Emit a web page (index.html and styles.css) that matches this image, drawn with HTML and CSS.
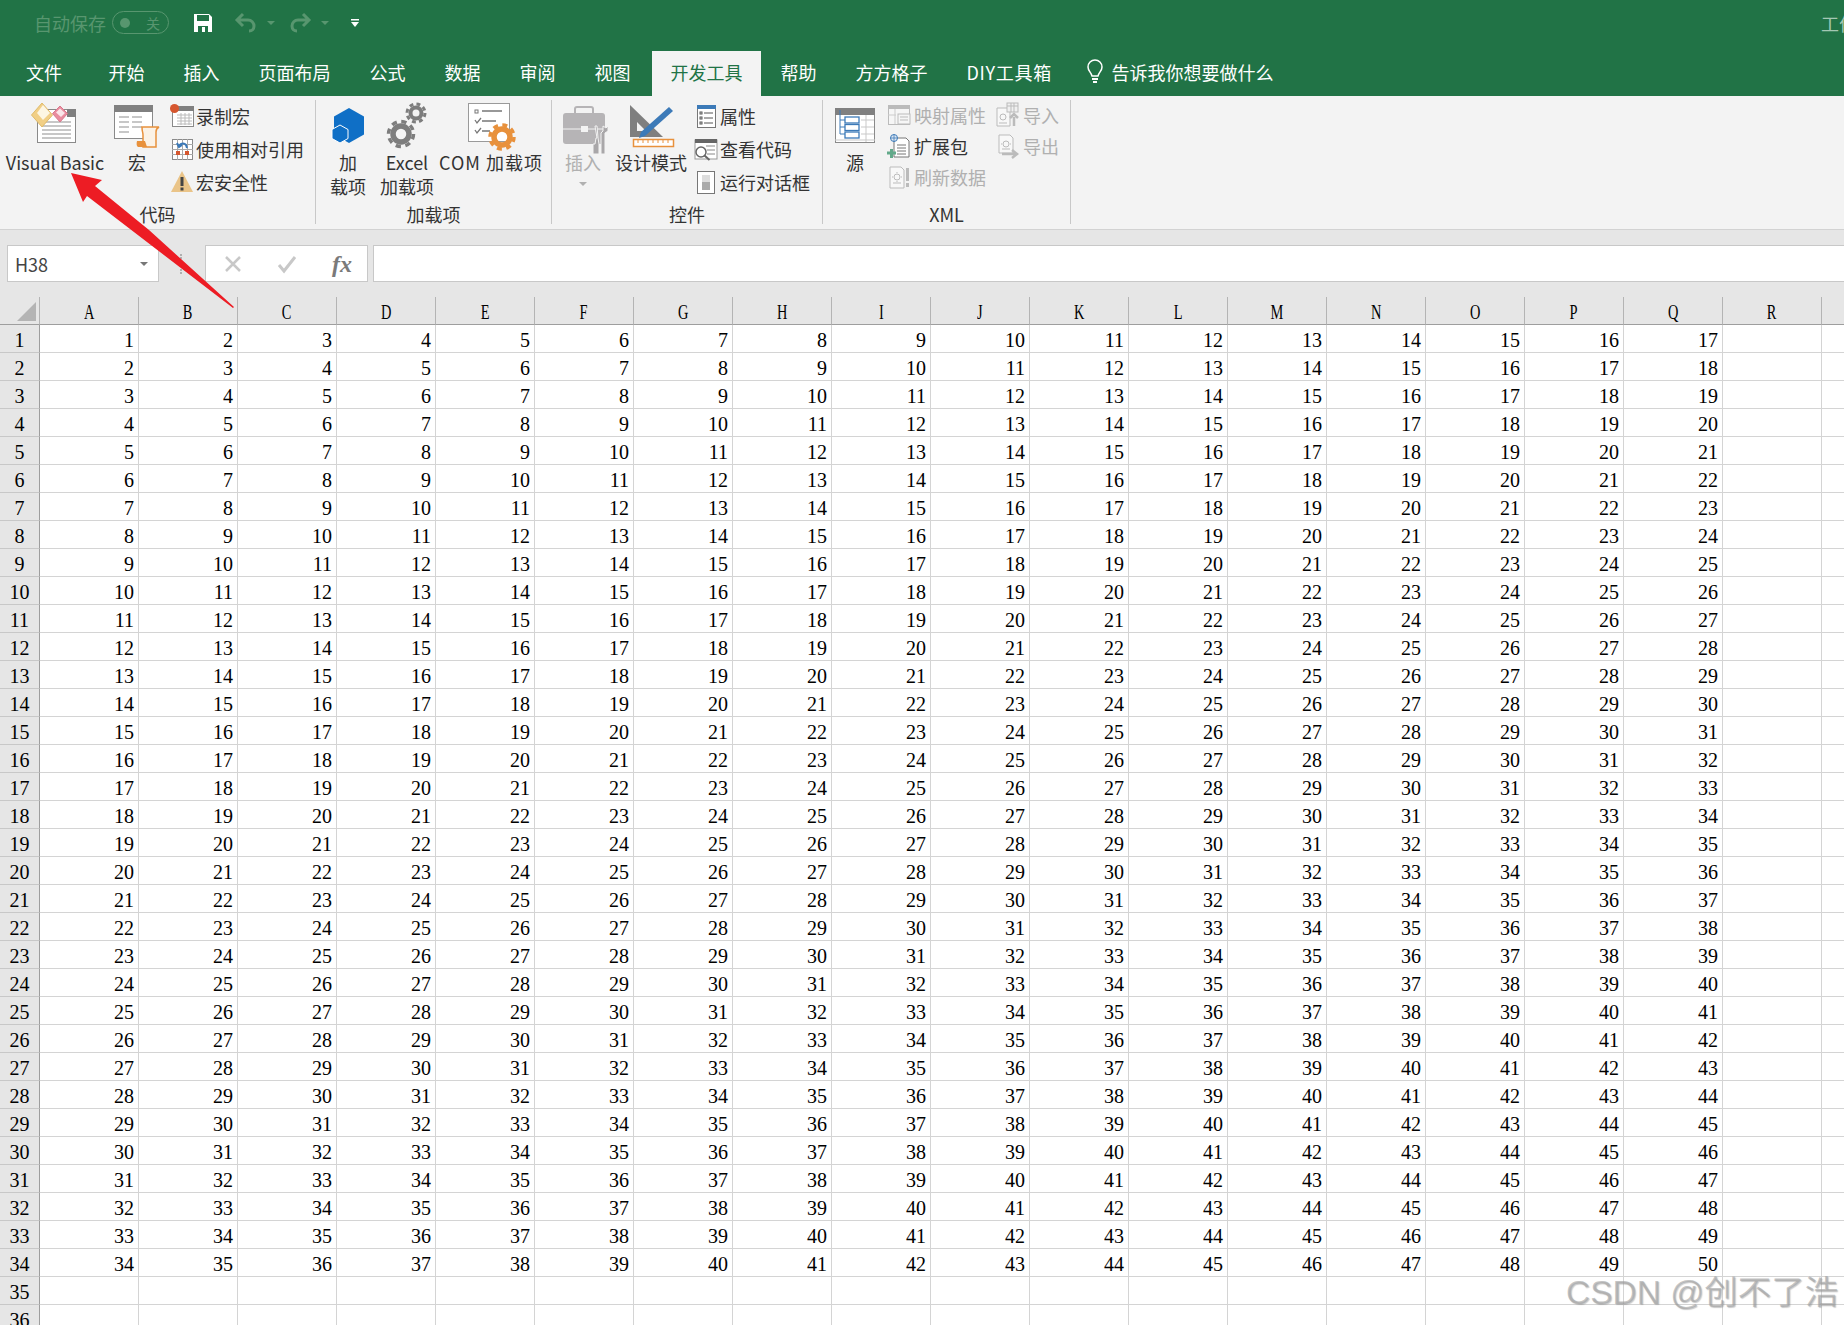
FILE: index.html
```html
<!DOCTYPE html>
<html lang="zh-CN">
<head>
    <meta charset="UTF-8">
    <title>开发工具 - Excel</title>
    <link rel="stylesheet" href="styles.css">
</head>
<body>
    <div class="titlebar">
        <span class="autosave">自动保存</span>
        <span class="toggle"><i class="toggle-dot"></i><span>关</span></span>
        <svg class="qa-save" width="20" height="20" viewBox="0 0 20 20"><path d="M1 1h15l3 3v15H1z" fill="#fff"/><rect x="4" y="2" width="12" height="6" fill="#217346"/><rect x="5" y="13" width="10" height="6" fill="#217346"/><rect x="9" y="14" width="3" height="5" fill="#fff"/></svg>
        <svg class="qa-undo" width="22" height="20" viewBox="0 0 22 20"><path d="M8 1L2 7l6 6M2 7h11a6 6 0 0 1 6 6c0 3-2 5-5 5" fill="none" stroke="#58966f" stroke-width="3"/></svg>
        <i class="qa-caret"></i>
        <svg class="qa-redo" width="22" height="20" viewBox="0 0 22 20"><path d="M14 1l6 6-6 6M20 7H9a6 6 0 0 0-6 6c0 3 2 5 5 5" fill="none" stroke="#58966f" stroke-width="3"/></svg>
        <i class="qa-caret"></i>
        <svg class="qa-more" width="8" height="8" viewBox="0 0 8 8"><rect width="8" height="1.5" fill="#fff"/><path d="M0 3h8L4 8z" fill="#fff"/></svg>
        <span class="doc-name">工作簿1 - Excel</span>
    </div>

    <div class="tabs">
        <span class="tab tab-file">文件</span>
        <span class="tab">开始</span>
        <span class="tab">插入</span>
        <span class="tab">页面布局</span>
        <span class="tab">公式</span>
        <span class="tab">数据</span>
        <span class="tab">审阅</span>
        <span class="tab">视图</span>
        <span class="tab tab-active">开发工具</span>
        <span class="tab">帮助</span>
        <span class="tab">方方格子</span>
        <span class="tab tab-diy">DIY工具箱</span>
        <span class="tell-me">
            <svg width="16" height="24" viewBox="0 0 16 24"><path d="M5 16C4 12 1 11 1 7a7 7 0 0 1 14 0c0 4-3 5-4 9z" fill="none" stroke="#fff" stroke-width="1.5"/><path d="M5 18h6v2H5zM6 21h4v2H6z" fill="#fff"/></svg>
            告诉我你想要做什么
        </span>
    </div>

    <div class="ribbon">
        <div class="group group-code">
            <div class="group-body">
                <div class="big-btn w-vb">
                    <svg width="48" height="48" viewBox="0 0 48 48"><rect x="6.500" y="9.500" width="38" height="33" fill="#fff" stroke="#8a8a8a"/><rect x="36" y="9" width="9" height="8" fill="#808080"/><path d="M11 22h29M11 26h29M11 30h29M11 34h29M11 38h29" stroke="#b5b5b5" stroke-width="1.500"/><path d="M11 3l10.500 12L11 27 .5 15z" fill="#f1cf86" stroke="#e0bb6a"/><path d="M12 5l7 8-7 7-6-7z" fill="#fdf6e3"/><path d="M29 6l7.500 7.500L29 22l-7.500-8.500z" fill="#e98d9f" stroke="#d9788c"/><path d="M29 8.500l5 4.500-4 4-5-4.500z" fill="#fbe6ea"/></svg>
                    <span class="big-label">Visual Basic</span>
                </div>
                <div class="big-btn w-macro">
                    <svg width="48" height="48" viewBox="0 0 48 48"><rect x="1.500" y="5.500" width="38" height="33" fill="#fff" stroke="#8a8a8a"/><rect x="1" y="5" width="39" height="7" fill="#808080"/><path d="M6 17h10M19 17h10M6 22h10M19 22h10M6 27h10M19 27h10M6 32h10" stroke="#b5b5b5" stroke-width="1.500"/><path d="M29 27h17c-2 1-3 3-3 5v15H30V35c0-3-1-3-1-8z" fill="#fbf2e6" stroke="#e8913c" stroke-width="1.500"/><path d="M24 41h8l2 6h-8c-2 0-3-2-2-6z" fill="#e8913c"/></svg>
                    <span class="big-label">宏</span>
                </div>
                <div class="small-col">
                    <div class="small-btn">
                        <svg width="24" height="24" viewBox="0 0 24 24"><rect x="2.500" y="2.500" width="21" height="20" fill="#fff" stroke="#8a8a8a"/><rect x="2" y="2" width="22" height="5" fill="#808080"/><path d="M7 11h15M7 14h15M7 17h15M7 20h15M11 9v12M15 9v12M19 9v12" stroke="#bbb"/><circle cx="4.500" cy="4.500" r="4.500" fill="#d6572f"/></svg>
                        <span>录制宏</span>
                    </div>
                    <div class="small-btn">
                        <svg width="24" height="24" viewBox="0 0 24 24"><rect x="2.500" y="2.500" width="20" height="20" fill="#fff" stroke="#8a8a8a"/><path d="M2 7.500h21M2 12.500h21M2 17.500h21M7.500 2v21M12.500 2v21M17.500 2v21" stroke="#a9a9a9"/><rect x="6" y="14" width="4" height="4" fill="#d6572f"/><rect x="15" y="14" width="4" height="4" fill="#d6572f"/><path d="M9 10a4 4 0 0 1 7-2l1 3M7 6l2 4 3-2" fill="none" stroke="#3b79b8" stroke-width="2"/></svg>
                        <span>使用相对引用</span>
                    </div>
                    <div class="small-btn">
                        <svg width="24" height="24" viewBox="0 0 24 24"><path d="M12 1l11 21H1z" fill="#eac488"/><rect x="10.500" y="7" width="3" height="9" fill="#444"/><rect x="10.500" y="17.500" width="3" height="3" fill="#444"/></svg>
                        <span>宏安全性</span>
                    </div>
                </div>
            </div>
            <div class="group-label">代码</div>
        </div>

        <div class="group group-addin">
            <div class="group-body">
                <div class="big-btn w-addin">
                    <svg width="48" height="48" viewBox="0 0 48 48"><path d="M25 8l15 8.500v18L25 43l-15-8.500v-18z" fill="#0f6fc6"/><path d="M16 25l8 4.500v9L16 43l-8-4.500v-9z" fill="#0f6fc6" stroke="#fff"/></svg>
                    <span class="big-label">加<br>载项</span>
                </div>
                <div class="big-btn w-excel">
                    <svg width="48" height="48" viewBox="0 0 48 48"><circle cx="18" cy="34" r="8" fill="none" stroke="#7d7d7d" stroke-width="5.500"/><circle cx="18" cy="34" r="12.500" fill="none" stroke="#7d7d7d" stroke-width="3.500" stroke-dasharray="5.300 4.500"/><circle cx="33" cy="13" r="5.500" fill="none" stroke="#7d7d7d" stroke-width="4"/><circle cx="33" cy="13" r="9" fill="none" stroke="#7d7d7d" stroke-width="3" stroke-dasharray="3.900 3.200"/></svg>
                    <span class="big-label">Excel<br>加载项</span>
                </div>
                <div class="big-btn w-com">
                    <svg width="48" height="48" viewBox="0 0 48 48"><rect x="1.500" y="3.500" width="41" height="38" fill="#fff" stroke="#9a9a9a"/><rect x="8" y="10" width="3" height="3" fill="none" stroke="#777"/><path d="M15 11h20M8 20l2 3 4-5M15 21h14M8 30l2 3 4-5M15 31h8" fill="none" stroke="#777" stroke-width="1.300"/><circle cx="35" cy="37" r="8" fill="none" stroke="#e8913c" stroke-width="5.500"/><circle cx="35" cy="37" r="12" fill="none" stroke="#e8913c" stroke-width="3.500" stroke-dasharray="5 4.420"/></svg>
                    <span class="big-label">COM 加载项</span>
                </div>
            </div>
            <div class="group-label">加载项</div>
        </div>

        <div class="group group-control">
            <div class="group-body">
                <div class="big-btn w-insert disabled">
                    <svg width="48" height="48" viewBox="0 0 48 48"><path d="M16 13V9c0-1 1-2 2-2h14c1 0 2 1 2 2v4" fill="none" stroke="#b6b4b6" stroke-width="2"/><rect x="4" y="13" width="42" height="31" rx="3" fill="#b6b4b6"/><path d="M4 29h42" stroke="#f3f3f3"/><rect x="22" y="26" width="7" height="6" fill="#f3f3f3"/><path d="M36 26l2 12h-1l-1 6h-2v10h6V44l-1-6-1-12zM44 26v5l-2 2v21h4V33l3-2v-5l-2 2z" fill="#a9a7a9" stroke="#f3f3f3"/></svg>
                    <span class="big-label">插入</span>
                    <i class="big-caret"></i>
                </div>
                <div class="big-btn w-design">
                    <svg width="48" height="48" viewBox="0 0 48 48"><path d="M3 5l33 32H3zM10 22v9h9z" fill="#7f7f7f" fill-rule="evenodd"/><path d="M42 7l4 4-28 25-6 2 2-6z" fill="#3c7ab8"/><rect x="6.500" y="39.500" width="40" height="7" fill="#fff" stroke="#e8913c" stroke-width="1.500"/><path d="M11 40v3M16 40v3M21 40v3M26 40v3M31 40v3M36 40v3M41 40v3" stroke="#e8913c"/></svg>
                    <span class="big-label">设计模式</span>
                </div>
                <div class="small-col col-control">
                    <div class="small-btn">
                        <svg width="24" height="24" viewBox="0 0 24 24"><rect x="3.500" y="1.500" width="18" height="22" fill="#fff" stroke="#777"/><rect x="3" y="1" width="19" height="4" fill="#3c7ab8"/><path d="M10 9h9M10 14h9M10 19h9" stroke="#555"/><rect x="6" y="8" width="2" height="2" fill="none" stroke="#555"/><rect x="6" y="13" width="2" height="2" fill="none" stroke="#555"/><rect x="6" y="18" width="2" height="2" fill="none" stroke="#555"/></svg>
                        <span>属性</span>
                    </div>
                    <div class="small-btn">
                        <svg width="24" height="24" viewBox="0 0 24 24"><rect x="1" y="3" width="22" height="19" fill="#fff" stroke="#999"/><rect x="1" y="2" width="22" height="4" fill="#666"/><path d="M12 9h9M13 13h8M13 17h8" stroke="#888"/><circle cx="7" cy="15" r="5" fill="#fff" stroke="#666" stroke-width="1.500"/><path d="M10.500 18.500l5 4.500" stroke="#666" stroke-width="2"/></svg>
                        <span>查看代码</span>
                    </div>
                    <div class="small-btn">
                        <svg width="24" height="24" viewBox="0 0 24 24"><rect x="3.500" y="1.500" width="17" height="22" fill="#fff" stroke="#777"/><rect x="8" y="5" width="8" height="15" fill="#aaa"/><rect x="8" y="5" width="8" height="7" fill="#ddd"/></svg>
                        <span>运行对话框</span>
                    </div>
                </div>
            </div>
            <div class="group-label">控件</div>
        </div>

        <div class="group group-xml">
            <div class="group-body">
                <div class="big-btn w-source">
                    <svg width="48" height="48" viewBox="0 0 48 48"><rect x="4.500" y="8.500" width="39" height="34" fill="#fff" stroke="#8a8a8a"/><rect x="4" y="8" width="40" height="7" fill="#808080"/><path d="M30 20h13M30 27h13M30 34h13M35 15v27M4 40h40" stroke="#c9c9c9"/><path d="M9 10v24h5M9 20h5M9 27h5" fill="none" stroke="#3c7ab8"/><rect x="14" y="17" width="14" height="6" fill="#fff" stroke="#3c7ab8" stroke-width="1.300"/><rect x="14" y="24.500" width="14" height="6" fill="#fff" stroke="#3c7ab8" stroke-width="1.300"/><rect x="14" y="32" width="14" height="6" fill="#fff" stroke="#3c7ab8" stroke-width="1.300"/></svg>
                    <span class="big-label">源</span>
                </div>
                <div class="small-col col-xml">
                    <div class="small-btn disabled">
                        <svg width="24" height="24" viewBox="0 0 24 24"><rect x="1.500" y="2.500" width="21" height="19" fill="#f6f6f6" stroke="#bbb"/><rect x="1" y="2" width="22" height="4" fill="#bbb"/><path d="M8 6v15M1 12h8" stroke="#ccc"/><rect x="11" y="11" width="12" height="10" fill="#f6f6f6" stroke="#bbb"/><path d="M13 14h8M13 17h8" stroke="#bbb"/></svg>
                        <span>映射属性</span>
                    </div>
                    <div class="small-btn">
                        <svg width="24" height="24" viewBox="0 0 24 24"><path d="M7 4h12l3 3v16H7z" fill="#fff" stroke="#777"/><path d="M10 11h9M10 14h9M10 17h9M10 20h9" stroke="#777"/><circle cx="7" cy="4" r="3.500" fill="#dfe9f3" stroke="#3c7ab8"/><path d="M3.500 4h7M7 .5v7" stroke="#3c7ab8" stroke-width=".8"/><path d="M0 19h9M4.500 15v9" stroke="#62a98a" stroke-width="3"/></svg>
                        <span>扩展包</span>
                    </div>
                    <div class="small-btn disabled">
                        <svg width="24" height="24" viewBox="0 0 24 24"><path d="M3 2h11l3 3v18H3z" fill="#f8f8f8" stroke="#bbb"/><circle cx="10" cy="12" r="3" fill="none" stroke="#bbb"/><path d="M5 12h1M14 12h1M10 7v1M10 16v1M6 18h8" stroke="#bbb"/><rect x="19" y="3" width="3" height="13" fill="#bbb"/><rect x="19" y="18" width="3" height="4" fill="#bbb"/></svg>
                        <span>刷新数据</span>
                    </div>
                </div>
                <div class="small-col col-xml col-xml2">
                    <div class="small-btn disabled">
                        <svg width="24" height="24" viewBox="0 0 24 24"><path d="M1 5h10l3 3v15H1z" fill="#f8f8f8" stroke="#bbb"/><circle cx="7" cy="14" r="3" fill="none" stroke="#bbb"/><path d="M3 20h8" stroke="#bbb"/><rect x="11" y="0" width="11" height="9" fill="#f0f0f0" stroke="#bbb"/><path d="M11 3h11M15 0v9M18 0v9" stroke="#bbb"/><path d="M18 23v-9M14 15l4-4 4 4" fill="none" stroke="#bbb" stroke-width="2.500"/></svg>
                        <span>导入</span>
                    </div>
                    <div class="small-btn disabled">
                        <svg width="24" height="24" viewBox="0 0 24 24"><path d="M3 1h11l3 3v15H3z" fill="#f8f8f8" stroke="#bbb"/><circle cx="10" cy="10" r="3" fill="none" stroke="#bbb"/><path d="M5 10h1M14 10h1M6 15h8" stroke="#bbb"/><path d="M6 20h14M16 16l5 4-5 4" fill="none" stroke="#bbb" stroke-width="2.500"/></svg>
                        <span>导出</span>
                    </div>
                </div>
            </div>
            <div class="group-label">XML</div>
        </div>
    </div>

    <div class="formula-bar">
        <div class="name-box"><span>H38</span><i class="name-caret"></i></div>
        <div class="grip"></div>
        <div class="fx-box">
            <svg width="18" height="18" viewBox="0 0 18 18"><path d="M2 2l14 14M16 2L2 16" stroke="#c8c8c8" stroke-width="2.500"/></svg>
            <svg width="20" height="18" viewBox="0 0 20 18"><path d="M2 10l5 6L18 2" fill="none" stroke="#c8c8c8" stroke-width="3"/></svg>
            <span class="fx">fx</span>
        </div>
        <div class="formula-input"></div>
    </div>

    <div class="sheet">
        <table class="grid">
            <colgroup>
                <col class="col-head">
                <col span="19" class="col-cell">
            </colgroup>
            <thead>
                <tr>
                    <th class="corner"><i class="corner-mark"></i></th>
                    <th><b>A</b></th><th><b>B</b></th><th><b>C</b></th><th><b>D</b></th><th><b>E</b></th><th><b>F</b></th>
                    <th><b>G</b></th><th><b>H</b></th><th><b>I</b></th><th><b>J</b></th><th><b>K</b></th><th><b>L</b></th>
                    <th><b>M</b></th><th><b>N</b></th><th><b>O</b></th><th><b>P</b></th><th><b>Q</b></th><th><b>R</b></th><th></th>
                </tr>
            </thead>
            <tbody>
<tr><th>1<td>1<td>2<td>3<td>4<td>5<td>6<td>7<td>8<td>9<td>10<td>11<td>12<td>13<td>14<td>15<td>16<td>17<td><td>
<tr><th>2<td>2<td>3<td>4<td>5<td>6<td>7<td>8<td>9<td>10<td>11<td>12<td>13<td>14<td>15<td>16<td>17<td>18<td><td>
<tr><th>3<td>3<td>4<td>5<td>6<td>7<td>8<td>9<td>10<td>11<td>12<td>13<td>14<td>15<td>16<td>17<td>18<td>19<td><td>
<tr><th>4<td>4<td>5<td>6<td>7<td>8<td>9<td>10<td>11<td>12<td>13<td>14<td>15<td>16<td>17<td>18<td>19<td>20<td><td>
<tr><th>5<td>5<td>6<td>7<td>8<td>9<td>10<td>11<td>12<td>13<td>14<td>15<td>16<td>17<td>18<td>19<td>20<td>21<td><td>
<tr><th>6<td>6<td>7<td>8<td>9<td>10<td>11<td>12<td>13<td>14<td>15<td>16<td>17<td>18<td>19<td>20<td>21<td>22<td><td>
<tr><th>7<td>7<td>8<td>9<td>10<td>11<td>12<td>13<td>14<td>15<td>16<td>17<td>18<td>19<td>20<td>21<td>22<td>23<td><td>
<tr><th>8<td>8<td>9<td>10<td>11<td>12<td>13<td>14<td>15<td>16<td>17<td>18<td>19<td>20<td>21<td>22<td>23<td>24<td><td>
<tr><th>9<td>9<td>10<td>11<td>12<td>13<td>14<td>15<td>16<td>17<td>18<td>19<td>20<td>21<td>22<td>23<td>24<td>25<td><td>
<tr><th>10<td>10<td>11<td>12<td>13<td>14<td>15<td>16<td>17<td>18<td>19<td>20<td>21<td>22<td>23<td>24<td>25<td>26<td><td>
<tr><th>11<td>11<td>12<td>13<td>14<td>15<td>16<td>17<td>18<td>19<td>20<td>21<td>22<td>23<td>24<td>25<td>26<td>27<td><td>
<tr><th>12<td>12<td>13<td>14<td>15<td>16<td>17<td>18<td>19<td>20<td>21<td>22<td>23<td>24<td>25<td>26<td>27<td>28<td><td>
<tr><th>13<td>13<td>14<td>15<td>16<td>17<td>18<td>19<td>20<td>21<td>22<td>23<td>24<td>25<td>26<td>27<td>28<td>29<td><td>
<tr><th>14<td>14<td>15<td>16<td>17<td>18<td>19<td>20<td>21<td>22<td>23<td>24<td>25<td>26<td>27<td>28<td>29<td>30<td><td>
<tr><th>15<td>15<td>16<td>17<td>18<td>19<td>20<td>21<td>22<td>23<td>24<td>25<td>26<td>27<td>28<td>29<td>30<td>31<td><td>
<tr><th>16<td>16<td>17<td>18<td>19<td>20<td>21<td>22<td>23<td>24<td>25<td>26<td>27<td>28<td>29<td>30<td>31<td>32<td><td>
<tr><th>17<td>17<td>18<td>19<td>20<td>21<td>22<td>23<td>24<td>25<td>26<td>27<td>28<td>29<td>30<td>31<td>32<td>33<td><td>
<tr><th>18<td>18<td>19<td>20<td>21<td>22<td>23<td>24<td>25<td>26<td>27<td>28<td>29<td>30<td>31<td>32<td>33<td>34<td><td>
<tr><th>19<td>19<td>20<td>21<td>22<td>23<td>24<td>25<td>26<td>27<td>28<td>29<td>30<td>31<td>32<td>33<td>34<td>35<td><td>
<tr><th>20<td>20<td>21<td>22<td>23<td>24<td>25<td>26<td>27<td>28<td>29<td>30<td>31<td>32<td>33<td>34<td>35<td>36<td><td>
<tr><th>21<td>21<td>22<td>23<td>24<td>25<td>26<td>27<td>28<td>29<td>30<td>31<td>32<td>33<td>34<td>35<td>36<td>37<td><td>
<tr><th>22<td>22<td>23<td>24<td>25<td>26<td>27<td>28<td>29<td>30<td>31<td>32<td>33<td>34<td>35<td>36<td>37<td>38<td><td>
<tr><th>23<td>23<td>24<td>25<td>26<td>27<td>28<td>29<td>30<td>31<td>32<td>33<td>34<td>35<td>36<td>37<td>38<td>39<td><td>
<tr><th>24<td>24<td>25<td>26<td>27<td>28<td>29<td>30<td>31<td>32<td>33<td>34<td>35<td>36<td>37<td>38<td>39<td>40<td><td>
<tr><th>25<td>25<td>26<td>27<td>28<td>29<td>30<td>31<td>32<td>33<td>34<td>35<td>36<td>37<td>38<td>39<td>40<td>41<td><td>
<tr><th>26<td>26<td>27<td>28<td>29<td>30<td>31<td>32<td>33<td>34<td>35<td>36<td>37<td>38<td>39<td>40<td>41<td>42<td><td>
<tr><th>27<td>27<td>28<td>29<td>30<td>31<td>32<td>33<td>34<td>35<td>36<td>37<td>38<td>39<td>40<td>41<td>42<td>43<td><td>
<tr><th>28<td>28<td>29<td>30<td>31<td>32<td>33<td>34<td>35<td>36<td>37<td>38<td>39<td>40<td>41<td>42<td>43<td>44<td><td>
<tr><th>29<td>29<td>30<td>31<td>32<td>33<td>34<td>35<td>36<td>37<td>38<td>39<td>40<td>41<td>42<td>43<td>44<td>45<td><td>
<tr><th>30<td>30<td>31<td>32<td>33<td>34<td>35<td>36<td>37<td>38<td>39<td>40<td>41<td>42<td>43<td>44<td>45<td>46<td><td>
<tr><th>31<td>31<td>32<td>33<td>34<td>35<td>36<td>37<td>38<td>39<td>40<td>41<td>42<td>43<td>44<td>45<td>46<td>47<td><td>
<tr><th>32<td>32<td>33<td>34<td>35<td>36<td>37<td>38<td>39<td>40<td>41<td>42<td>43<td>44<td>45<td>46<td>47<td>48<td><td>
<tr><th>33<td>33<td>34<td>35<td>36<td>37<td>38<td>39<td>40<td>41<td>42<td>43<td>44<td>45<td>46<td>47<td>48<td>49<td><td>
<tr><th>34<td>34<td>35<td>36<td>37<td>38<td>39<td>40<td>41<td>42<td>43<td>44<td>45<td>46<td>47<td>48<td>49<td>50<td><td>
<tr><th>35<td><td><td><td><td><td><td><td><td><td><td><td><td><td><td><td><td><td><td>
<tr><th>36<td><td><td><td><td><td><td><td><td><td><td><td><td><td><td><td><td><td><td>
            </tbody>
        </table>
    </div>

    <!-- annotation arrow drawn over the screenshot -->
    <svg class="arrow" width="1844" height="1325" viewBox="0 0 1844 1325"><path d="M71 173L102 180L95 186L149 230L234 307L233 308L87 196L83 202z" fill="#ed1c24"/></svg>
    <div class="watermark">CSDN @创不了浩</div>
</body>
</html>
```

FILE: styles.css
```css
html, body {
    margin: 0;
    padding: 0;
}

body {
    position: relative;
    width: 1844px;
    height: 1325px;
    overflow: hidden;
    background: #fff;
    font-family: "Noto Sans CJK SC", "Open Sans", sans-serif;
    font-size: 18px;
    color: #333;
}

svg {
    display: block;
    flex-shrink: 0;
    overflow: visible;
}

/* title bar */
.titlebar {
    display: flex;
    align-items: center;
    height: 47px;
    padding: 0 0 6px 34px;
    box-sizing: content-box;
    height: 45px;
    background: #217346;
    color: #58966f;
    line-height: 24px;
    white-space: nowrap;
}

.autosave {
    width: 78px;
}

.toggle {
    display: flex;
    align-items: center;
    justify-content: space-between;
    box-sizing: border-box;
    width: 57px;
    height: 23px;
    padding: 0 8px 0 7px;
    border: 1px solid #58966f;
    border-radius: 12px;
    font-size: 14px;
}

.toggle-dot {
    width: 10px;
    height: 10px;
    border-radius: 50%;
    background: #58966f;
}

.qa-save {
    margin-left: 24px;
}

.qa-undo {
    margin-left: 22px;
}

.qa-redo {
    margin-left: 14px;
}

.qa-caret {
    width: 0;
    height: 0;
    margin-left: 10px;
    border: 4px solid transparent;
    border-top-color: #58966f;
    border-bottom: 0;
}

.qa-more {
    margin-left: 22px;
}

.doc-name {
    width: 23px;
    margin-left: auto;
    overflow: hidden;
    color: #a3c7b3;
}

/* tabs */
.tabs {
    display: flex;
    align-items: stretch;
    height: 45px;
    background: #217346;
    color: #fff;
    line-height: 42px;
    white-space: nowrap;
}

.tab {
    padding: 0 19.5px;
}

.tab-file {
    padding: 0 27px 0 26px;
}

.tab-active {
    margin-left: 2px;
    padding: 0 18.5px;
    background: #f3f3f3;
    color: #217346;
}

.tab-diy {
    letter-spacing: 0.7px;
}

.tell-me {
    display: flex;
    align-items: center;
    gap: 8px;
    margin-left: 16px;
    padding-bottom: 3px;
}

/* ribbon */
.ribbon {
    display: flex;
    box-sizing: border-box;
    height: 134px;
    padding-top: 4px;
    background: #f3f3f3;
    border-bottom: 1px solid #d2d2d2;
    line-height: 24px;
}

.group {
    display: flex;
    flex-direction: column;
    box-sizing: border-box;
    height: 124px;
    border-right: 1px solid #c8c8c8;
}

.group-code {
    width: 316px;
}

.group-addin {
    width: 236px;
}

.group-control {
    width: 271px;
}

.group-xml {
    width: 248px;
}

.group-body {
    display: flex;
    flex: 1;
}

.group-code .group-body {
    padding-left: 6px;
}

.group-label {
    margin-bottom: -2px;
    text-align: center;
}

.big-btn {
    display: flex;
    flex-direction: column;
    flex-shrink: 0;
    align-items: center;
    text-align: center;
    white-space: nowrap;
}

.big-label {
    margin-top: 2px;
}

.big-caret {
    width: 0;
    height: 0;
    margin-top: 8px;
    border: 4px solid transparent;
    border-top-color: #b0b0b0;
    border-bottom: 0;
}

.w-vb {
    width: 98px;
}

.w-macro {
    width: 66px;
}

.w-addin {
    width: 64px;
}

.w-excel {
    width: 54px;
}

.w-com {
    width: 114px;
}

.w-com .big-label {
    letter-spacing: 1px;
}

.w-insert {
    width: 62px;
}

.w-design {
    width: 74px;
}

.w-source {
    width: 64px;
}

.small-col {
    display: flex;
    flex-direction: column;
    margin-top: -1px;
}

.small-btn {
    display: flex;
    align-items: center;
    gap: 2px;
    height: 33px;
    white-space: nowrap;
}

.col-control {
    margin-left: 6px;
}

.col-xml .small-btn {
    gap: 3px;
    height: 31px;
}

.col-xml2 {
    margin-left: 10px;
}

.disabled {
    color: #b0b0b0;
}

/* formula bar */
.formula-bar {
    display: flex;
    align-items: flex-start;
    box-sizing: border-box;
    height: 67px;
    padding: 15px 0 0 7px;
    background: #e6e6e6;
}

.name-box {
    display: flex;
    align-items: center;
    justify-content: space-between;
    box-sizing: border-box;
    width: 152px;
    height: 37px;
    padding: 0 10px 0 7px;
    background: #fff;
    border: 1px solid #c8c8c8;
    color: #444;
}

.name-caret {
    width: 0;
    height: 0;
    border: 4px solid transparent;
    border-top-color: #777;
    border-bottom: 0;
}

.grip {
    width: 0;
    height: 20px;
    margin: 9px 23px 0 21px;
    border-left: 2px dotted #b0b0b0;
}

.fx-box {
    display: flex;
    align-items: center;
    gap: 35px;
    box-sizing: border-box;
    width: 163px;
    height: 37px;
    padding-left: 18px;
    background: #fff;
    border: 1px solid #c8c8c8;
}

.fx {
    font-family: "Liberation Serif", serif;
    font-size: 24px;
    line-height: 30px;
    font-style: italic;
    font-weight: bold;
    color: #7a7a7a;
}

.formula-input {
    flex: 1;
    box-sizing: border-box;
    height: 37px;
    margin-left: 5px;
    background: #fff;
    border: 1px solid #c8c8c8;
    border-right: 0;
}

/* sheet */
.sheet {
    height: 1028px;
    overflow: hidden;
}

.grid {
    width: 1921px;
    table-layout: fixed;
    border-collapse: separate;
    border-spacing: 0;
    font-family: "Liberation Serif", serif;
    font-size: 20px;
    line-height: 24px;
    color: #000;
}

.col-head {
    width: 40px;
}

.col-cell {
    width: 99px;
}

.grid th,
.grid td {
    box-sizing: border-box;
    height: 28px;
    padding: 3px 0 0;
    font-weight: normal;
    overflow: hidden;
}

.grid td {
    padding-right: 4px;
    text-align: right;
    border-right: 1px solid #d4d4d4;
    border-bottom: 1px solid #d4d4d4;
}

.grid tbody th {
    text-align: center;
    background: #e6e6e6;
    border-right: 1px solid #9e9e9e;
    border-bottom: 1px solid #c8c8c8;
}

.grid thead th {
    padding-top: 4px;
    line-height: 23px;
    background: #e6e6e6;
    border-right: 1px solid #b4b4b4;
    border-bottom: 1px solid #9e9e9e;
}

.grid thead b {
    display: inline-block;
    font-weight: normal;
    transform: scaleX(0.72);
}

.grid .corner {
    position: relative;
    border-right: 1px solid #b4b4b4;
}

.corner-mark {
    position: absolute;
    right: 3px;
    bottom: 3px;
    width: 0;
    height: 0;
    border-style: solid;
    border-width: 0 0 19px 19px;
    border-color: transparent transparent #b4b4b4 transparent;
}

/* things lying over the page */
.arrow {
    position: absolute;
    top: 0;
    left: 0;
    pointer-events: none;
}

.watermark {
    position: absolute;
    top: 1271px;
    left: 1566px;
    font-family: "Liberation Sans", "Noto Sans CJK SC", sans-serif;
    font-size: 33.500px;
    line-height: 44px;
    white-space: nowrap;
    color: rgba(160, 160, 160, 0.6);
    text-shadow: 1px 1px 1px rgba(120, 120, 120, 0.4);
}
```
